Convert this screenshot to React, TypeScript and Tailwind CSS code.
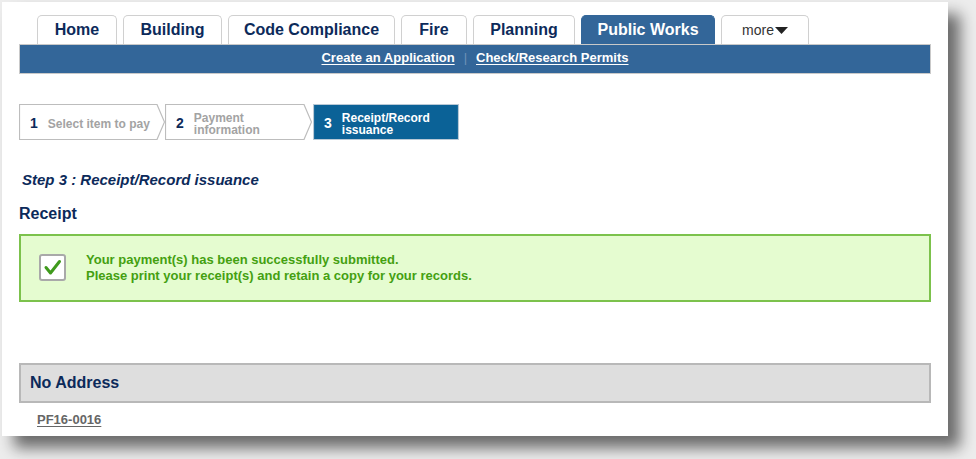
import React from "react";

const tabs = [
  { label: "Home", w: 80 },
  { label: "Building", w: 99 },
  { label: "Code Compliance", w: 167 },
  { label: "Fire", w: 66 },
  { label: "Planning", w: 102 },
  { label: "Public Works", w: 134, active: true },
];

function Step({
  num,
  lines,
  width,
  active,
  arrow,
}: {
  num: string;
  lines: string[];
  width: number;
  active?: boolean;
  arrow?: boolean;
}) {
  const h = 36;
  const tip = 8;
  const bodyW = width - (arrow ? tip : 0);
  const pts = arrow
    ? `0.5,0.5 ${bodyW},0.5 ${width - 0.5},${h / 2} ${bodyW},${h - 0.5} 0.5,${h - 0.5}`
    : `0.5,0.5 ${width - 0.5},0.5 ${width - 0.5},${h - 0.5} 0.5,${h - 0.5}`;
  return (
    <div className="relative h-[36px] shrink-0" style={{ width }}>
      <svg className="absolute inset-0" width={width} height={h}>
        <polygon
          points={pts}
          fill={active ? "#0b6297" : "#ffffff"}
          stroke={active ? "#b9c9d6" : "#bdbdbd"}
          strokeWidth={1.2}
        />
      </svg>
      <div className="relative flex h-full items-center pl-[11px] pt-[3px]">
        <span
          className={`text-[14px] font-bold ${active ? "text-white" : "text-[#0c2a5a]"}`}
        >
          {num}
        </span>
        <span
          className={`ml-[10px] text-[12px] font-bold leading-[12px] ${
            active ? "text-white" : "text-[#a3a3a3]"
          }`}
        >
          {lines.map((l, i) => (
            <span key={i} className="block">
              {l}
            </span>
          ))}
        </span>
      </div>
    </div>
  );
}

export default function App() {
  return (
    <div
      className="w-[976px] h-[459px] overflow-hidden bg-[#ededed]"
      style={{ fontFamily: '"Liberation Sans", Arial, sans-serif' }}
    >
      <div className="ml-[2px] mt-[2px] w-[946px] h-[434px] bg-white px-[17px] shadow-[12px_12px_14px_rgba(0,0,0,0.55)]">
        {/* Tabs */}
        <div className="flex items-end gap-[6px] pl-[18px] pt-[13px]">
          {tabs.map((t) => (
            <div
              key={t.label}
              className={`flex h-[29px] items-center justify-center rounded-t-[5px] border border-b-0 text-[16px] font-bold ${
                t.active
                  ? "border-[#336699] bg-[#336699] text-white"
                  : "border-[#d0d0d0] bg-white text-[#0c2a5a]"
              }`}
              style={{ width: t.w }}
            >
              {t.label}
            </div>
          ))}
          <div className="flex h-[29px] w-[88px] items-center justify-center rounded-t-[5px] border border-b-0 border-[#d0d0d0] bg-white text-[14px] text-[#333]">
            more
            <svg width="13" height="8" viewBox="0 0 13 8" className="ml-[1px] mt-[1px]">
              <polygon points="0,0 13,0 6.5,7" fill="#222" />
            </svg>
          </div>
        </div>
        {/* Blue bar */}
        <div className="flex h-[30px] items-center justify-center border border-[#c9c9c9] bg-[#336699] pb-[2px] text-[13px] font-bold text-white">
          <span className="underline underline-offset-2">Create an Application</span>
          <span className="mx-[9px] text-[#6f93b8] font-normal">|</span>
          <span className="underline underline-offset-2">Check/Research Permits</span>
        </div>

        {/* Steps */}
        <div className="mt-[30px] flex items-center">
          <Step num="1" lines={["Select item to pay"]} width={146} arrow />
          <Step num="2" lines={["Payment", "information"]} width={147} arrow />
          <div className="w-[1px]" />
          <Step num="3" lines={["Receipt/Record", "issuance"]} width={146} active />
        </div>

        <div className="mt-[29px] pl-[3px] text-[15px] font-bold italic text-[#0c2a5a]">
          Step 3 : Receipt/Record issuance
        </div>
        <div className="mt-[10px] text-[16px] font-bold text-[#0c2a5a]">Receipt</div>

        {/* Success box */}
        <div className="mt-[8px] flex h-[68px] items-center border-2 border-[#7cc24c] bg-[#e5fcd0] pl-[18px]">
          <div className="flex h-[27px] w-[27px] items-center justify-center rounded-[3px] border-2 border-[#a9a9a9] bg-white">
            <svg width="19" height="17" viewBox="0 0 19 17">
              <path
                d="M3 8.5 L7.5 14 L16.5 2.5"
                fill="none"
                stroke="#3f9a1c"
                strokeWidth="3"
                strokeLinecap="round"
                strokeLinejoin="round"
              />
            </svg>
          </div>
          <div className="ml-[20px] text-[13px] font-bold leading-[16px] text-[#44a011]">
            <div>Your payment(s) has been successfully submitted.</div>
            <div>Please print your receipt(s) and retain a copy for your records.</div>
          </div>
        </div>

        {/* No Address */}
        <div className="mt-[61px] flex h-[40px] items-center border-2 border-[#b8b8b8] bg-[#dedede] pl-[9px] text-[16px] font-bold text-[#0c2a5a]">
          No Address
        </div>
        <div className="mt-[7px] pl-[18px] text-[13px] font-bold text-[#666]">
          <span className="underline underline-offset-2">PF16-0016</span>
        </div>
      </div>
    </div>
  );
}
